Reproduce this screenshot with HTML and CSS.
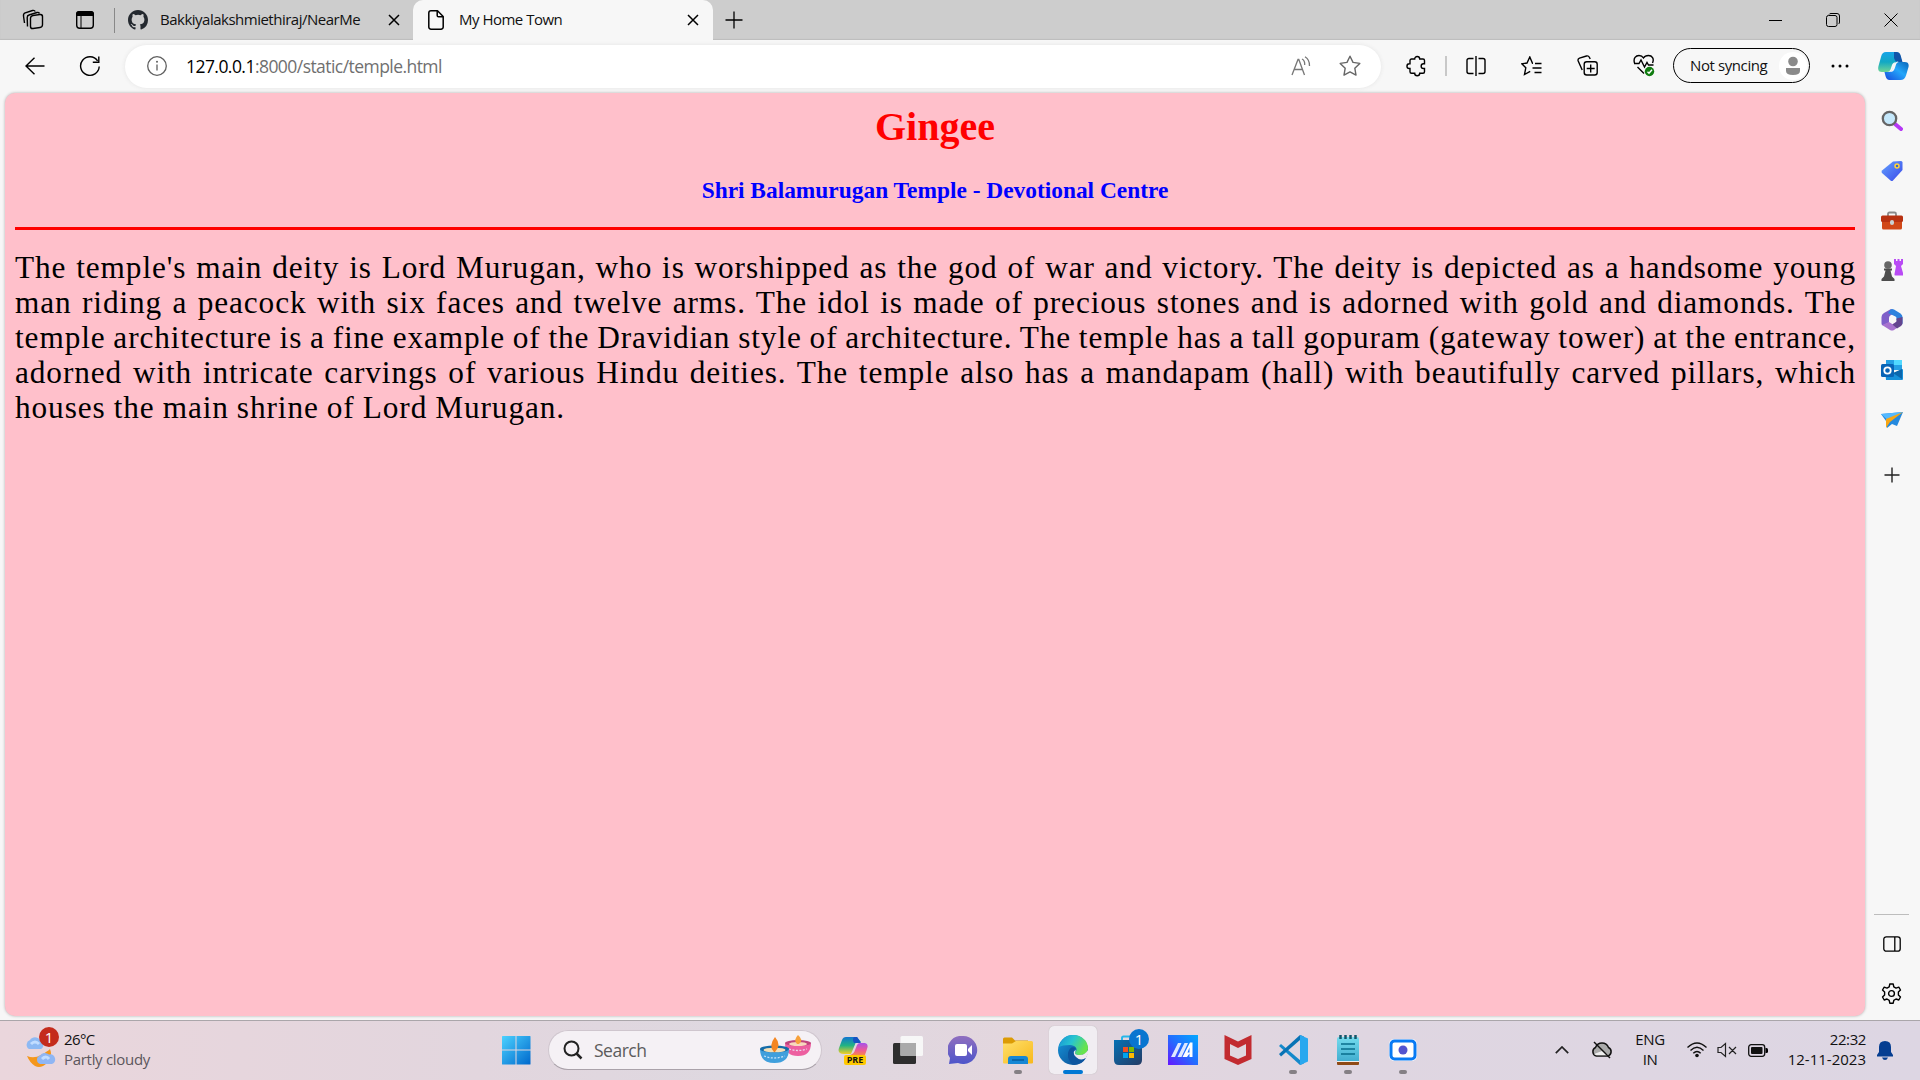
FILE: index.html
```html
<!DOCTYPE html>
<html lang="en">
<head>
<meta charset="utf-8">
<title>My Home Town</title>
<link rel="stylesheet" href="styles.css">
</head>
<body>
<div class="tabstrip">
  <div class="cell workspaces"><svg width="22" height="22" viewBox="0 0 22 22" class="line"><rect x="8.500" y="6" width="12" height="13" rx="2.500" transform="skewY(-8) translate(0 2)"/><path d="M5.500 17.500 L5.200 8.500 Q5.200 6.500 7 6 L15 3.500 Q16.500 3 17.500 4.500"/><path d="M2.500 14 L1.500 7 Q1.200 4.500 3.200 3.800 L10.500 1.500 Q12.500 1 13.300 2.500"/></svg></div>
  <div class="cell tabmenu"><svg width="20" height="20" viewBox="0 0 20 20"><rect x="1.700" y="1.700" width="16.600" height="16.600" rx="3" fill="none" stroke="#000" stroke-width="1.400"/><path d="M1 6V4a3 3 0 0 1 3-3h12a3 3 0 0 1 3 3v2z"/><path d="M6 6v12" stroke="#000"/></svg></div>
  <div class="tab idle">
    <svg width="20" height="20" viewBox="0 0 16 16"><path fill="#24292f" d="M8 0C3.580 0 0 3.580 0 8c0 3.540 2.290 6.530 5.470 7.590.4.070.55-.17.55-.38 0-.19-.01-.82-.01-1.490-2.010.37-2.530-.49-2.690-.94-.09-.23-.48-.94-.82-1.130-.28-.15-.68-.52-.01-.53.63-.01 1.080.58 1.230.82.720 1.210 1.870.87 2.330.66.070-.52.280-.87.510-1.070-1.780-.2-3.640-.89-3.640-3.950 0-.87.310-1.590.82-2.150-.08-.2-.36-1.020.08-2.120 0 0 .67-.21 2.200.82a7.600 7.600 0 0 1 4 0c1.530-1.040 2.200-.82 2.200-.82.44 1.100.16 1.920.08 2.120.51.56.82 1.270.82 2.150 0 3.070-1.870 3.750-3.650 3.950.29.25.54.73.54 1.480 0 1.070-.01 1.930-.01 2.200 0 .21.15.46.55.38A8 8 0 0 0 16 8c0-4.420-3.580-8-8-8z"/></svg>
    <span class="t-repo">Bakkiyalakshmiethiraj/NearMe</span>
    <svg class="x" width="12" height="12" viewBox="0 0 12 12"><path d="M1 1l10 10M11 1L1 11" stroke="#000" stroke-width="1.500"/></svg>
  </div>
  <div class="tab active">
    <svg width="16" height="20" viewBox="0 0 16 20" fill="none" stroke="#000" stroke-width="1.500" stroke-linejoin="round"><path d="M3 .8h6.500L15.200 6.500V17a2.200 2.200 0 0 1-2.200 2.200H3A2.200 2.200 0 0 1 .8 17V3A2.200 2.200 0 0 1 3 .8z"/><path d="M9.200 1v4.500q0 1.300 1.300 1.300h4.500"/></svg>
    <span class="t-home">My Home Town</span>
    <svg class="x" width="12" height="12" viewBox="0 0 12 12"><path d="M1 1l10 10M11 1L1 11" stroke="#000" stroke-width="1.500"/></svg>
  </div>
  <svg class="plus" width="18" height="18" viewBox="0 0 18 18"><path d="M9 .5v17M.5 9h17" stroke="#000" stroke-width="1.300"/></svg>
  <div class="wincontrols">
    <svg width="13" height="14"><path d="M0 7.500h13" stroke="#000"/></svg>
    <svg width="14" height="14" viewBox="0 0 14 14" fill="none" stroke="#000"><rect x=".5" y="2.500" width="10.500" height="11" rx="2"/><path d="M3 1.500Q3.500.5 5 .5h6a2.500 2.500 0 0 1 2.500 2.500v6q0 1.500-1 2"/></svg>
    <svg width="14" height="14" viewBox="0 0 14 14"><path d="M.5 .5l13 13M13.500 .5L.5 13.500" stroke="#000"/></svg>
  </div>
</div>

<div class="toolbar">
  <div class="cell back"><svg width="20" height="18" viewBox="0 0 20 18" class="line"><path d="M19.500 9H1M9.500 .7L1 9l8.500 8.300"/></svg></div>
  <div class="cell reload"><svg width="22" height="22" viewBox="0 0 22 22" class="line"><path d="M20.200 11.500A9.300 9.300 0 1 1 18.600 5.800"/><path d="M19.800 1.500v5.800h-6"/></svg></div>
  <div class="address">
    <svg width="20" height="20" viewBox="0 0 20 20"><circle cx="10" cy="10" r="9.300" fill="none" stroke="#606060" stroke-width="1.300"/><path d="M10 8.500v6" stroke="#606060" stroke-width="1.300"/><circle cx="10" cy="5.800" r="1" fill="#606060"/></svg>
    <span class="url"><b>127.0.0.1</b>:8000/static/temple.html</span>
    <svg class="read" width="20" height="20" viewBox="0 0 20 20" fill="none" stroke="#777" stroke-width="1.300"><path d="M1 19L7 3.500h.8L13.500 19M3 13.500h8.500M11 3q3 1.500 2.700 6M14 .8q4.700 3 4.500 9.200"/></svg>
    <svg class="star" width="22" height="22" viewBox="0 0 22 22" fill="none" stroke="#666" stroke-width="1.400" stroke-linejoin="round"><path d="M11 1.200l3 6.200 6.800 1-5 4.800 1.200 6.900L11 16.900l-6 3.200 1.200-6.900-5-4.800 6.800-1z"/></svg>
  </div>
  <div class="tools">
    <svg width="20" height="22" viewBox="0 0 20 22" class="line"><path d="M5.500 4h3.200a2.500 2.500 0 0 1 5 0H17a1.500 1.500 0 0 1 1.500 1.500v3.300h-1a2.300 2.300 0 0 0 0 4.700h1v3.300a1.500 1.500 0 0 1-1.500 1.500h-3.300a2.500 2.500 0 0 1-5 0H5.500A1.500 1.500 0 0 1 4 16.800v-3.300H3.300a2.300 2.300 0 0 1 0-4.700H4V5.500A1.500 1.500 0 0 1 5.500 4z"/></svg>
    <i class="vrule"></i>
    <svg width="20" height="20" viewBox="0 0 20 20" class="line"><path d="M7.500 2.500H3A2 2 0 0 0 1 4.500v11a2 2 0 0 0 2 2h4.500M12.500 2.500H17a2 2 0 0 1 2 2v11a2 2 0 0 1-2 2h-4.500M10 0v20"/></svg>
    <svg width="21" height="20" viewBox="0 0 21 20" class="line"><path d="M12 7.200h-.5L8.800 1 6 7 .8 7.800l4 4L3.500 18.500l5.700-3.200M14 7.500h6.500M11.500 12h9M13.500 16.500h7"/></svg>
    <svg width="21" height="21" viewBox="0 0 21 21" class="line"><rect x="7.200" y="6.700" width="13" height="13.300" rx="2.500"/><path d="M13.700 9.500v8M9.700 13.500h8M5.200 15L1.200 6Q.5 4 2.500 3.200L9.500 1q2-.5 3 1.500l.7 1.500"/></svg>
    <svg width="22" height="23" viewBox="0 0 22 23" class="line"><path d="M1.500 9C0 4 3 1.500 6 1.500q3 0 4.500 2.500Q12 1.500 15.500 1.500c3.500 0 6 3 4 7.500M1 9.500h5L8 6l3.500 7 2.500-4.500 1.500 2.500h5M4.500 13l6.500 6.500"/><circle cx="16.500" cy="17.500" r="4.700" fill="#107c10" stroke="none"/><path d="M14.500 17.800l1.500 1.500 3-3.500" stroke="#fff"/></svg>
  </div>
  <div class="sync"><span>Not syncing</span><svg width="28" height="28" viewBox="0 0 28 28"><circle cx="14" cy="14" r="14" fill="#fff"/><circle cx="14" cy="9.500" r="4.800" fill="#8a8a8a"/><path d="M7 16h14v3q0 4-7 4t-7-4z" fill="#8a8a8a"/></svg></div>
  <svg class="dots" width="18" height="4" viewBox="0 0 18 4"><circle cx="2" cy="2" r="1.500"/><circle cx="9" cy="2" r="1.500"/><circle cx="16" cy="2" r="1.500"/></svg>
  <svg class="copilot" width="31" height="28" viewBox="0 0 31 28">
    <defs><linearGradient id="ca" x1="0" y1="0" x2="0" y2="1"><stop offset="0" stop-color="#18a5e8"/><stop offset=".5" stop-color="#12a8c4"/><stop offset="1" stop-color="#6fd596"/></linearGradient><linearGradient id="cb" x1="1" y1="0" x2="0" y2="1"><stop offset="0" stop-color="#0765b8"/><stop offset=".45" stop-color="#24a6fa"/><stop offset="1" stop-color="#164bdc"/></linearGradient></defs>
    <path d="M17.500 10h9q5 0 4 5l-2.500 8.500Q26.500 28 22.500 28H11.500q-3 0-4-4l-1-4h4q3 0 4-3z" fill="url(#cb)"/>
    <path d="M8 0h10q3 0 4 3l2 7h-5q-4 0-5 3l-1.500 4.500q-1 2.500-3.500 2.500H4q-5 0-3.500-6L3 5Q4 0 8 0z" fill="url(#ca)"/>
    <path d="M16 0h2.500q3 0 4 3l2 7h-5q-3-1-3.500-4z" fill="#1155a9"/>
    <path d="M19.500 9.500q-3 .5-4 3.500l-1.500 4.500q-.8 2-3 2.500 4.500.5 5.700-3.500l1.500-4.500q.5-1.500 2.500-2z" fill="#f7f7f7"/></svg>
</div>

<div class="main">
  <div class="page">
    <h1>Gingee</h1>
    <h3>Shri Balamurugan Temple - Devotional Centre</h3>
    <hr>
    <div class="story">
      <p>The temple's main deity is Lord Murugan, who is worshipped as the god of war and victory. The deity is depicted as a handsome young</p>
      <p>man riding a peacock with six faces and twelve arms. The idol is made of precious stones and is adorned with gold and diamonds. The</p>
      <p>temple architecture is a fine example of the Dravidian style of architecture. The temple has a tall gopuram (gateway tower) at the entrance,</p>
      <p>adorned with intricate carvings of various Hindu deities. The temple also has a mandapam (hall) with beautifully carved pillars, which</p>
      <p class="last">houses the main shrine of Lord Murugan.</p>
    </div>
  </div>
  <div class="sidebar">
    <div class="s"><svg width="22" height="22" viewBox="0 0 22 22"><path d="M14 14l6 5" stroke="#b638f5" stroke-width="4" stroke-linecap="round"/><circle cx="8.500" cy="8.500" r="6.700" fill="#c5e8fb" stroke="#656565" stroke-width="2.300"/></svg></div>
    <div class="s"><svg width="22" height="22" viewBox="0 0 22 22"><defs><linearGradient id="tg" x1="0" y1="0" x2="1" y2="1"><stop offset="0" stop-color="#64a2ff"/><stop offset="1" stop-color="#3948e8"/></linearGradient></defs><path d="M12 1.500L20 1q1.500 0 1.500 1.500V10L12 20.500q-1 1-2.500 0L1 13q-1-1 0-2.500z" fill="url(#tg)"/><circle cx="16" cy="6" r="2" fill="#3b64ca" stroke="#ffd43a" stroke-width="1.500"/></svg></div>
    <div class="s"><svg width="24" height="20" viewBox="0 0 24 20"><path d="M8 5V3q0-1.500 1.500-1.500h5Q16 1.500 16 3v2" fill="none" stroke="#8a8a8a" stroke-width="1.800"/><rect x="2" y="9" width="20" height="9.500" rx="1.500" fill="#d14818"/><rect x="1" y="4.500" width="22" height="6.500" rx="1.500" fill="#b83212"/><rect x="10" y="9" width="4" height="5" rx="2" fill="#c9d2d4"/></svg></div>
    <div class="s"><svg width="24" height="24" viewBox="0 0 24 24"><path d="M14 1v5l2 2-1.500 8q-.5 1.500 1 1.500H23V15l-2-7 2-2V1h-2v2h-1.500V1h-2v2H16V1z" fill="#b94bf5"/><circle cx="8" cy="7" r="3.800" fill="#666"/><path d="M4 10.500h8v2h-1.500l1.500 6 2.500 2.500v2H1.500v-2L4 18.500l1.500-6H4z" fill="#4d4d4d"/></svg></div>
    <div class="s"><svg width="22" height="22" viewBox="0 0 22 22"><path d="M10 0L3 4Q.5 5.500.5 8v6.500q0 2.500 2.500 1.500l5-2.500V9q0-2 2-3l4-2z" fill="#7f5fc9"/><path d="M10 .2q1.500-.5 3 .3l6.500 4Q21.500 6 21.500 8v7l-6-4V9q0-1-1-1.500L7 4z" fill="#2d82de"/><path d="M1 16l7-3 3.500 2.200L15 13l5 3-7 5q-2 1-4 0z" fill="#a772cf"/><path d="M15.500 9.500l6-1.500v6q0 2-1.500 3l-4 2.500-4.500-4 3-2q1-.5 1-2z" fill="#63458f"/></svg></div>
    <div class="s"><svg width="22" height="22" viewBox="0 0 22 22"><path d="M5 1h15q1 0 1 1v9H5z" fill="#25a0e4"/><path d="M13 1h8v5h-8z" fill="#50d9ff"/><path d="M4 10l9 4 9-4v10q0 1-1 1H5z" fill="#1690da"/><path d="M12 14l9-4v10z" fill="#0b66ac"/><rect x="0" y="5" width="13" height="13" rx="1.500" fill="#0864b6"/><circle cx="6.500" cy="11.500" r="3.200" fill="none" stroke="#fff" stroke-width="1.800"/></svg></div>
    <div class="s"><svg width="22" height="18" viewBox="0 0 22 18"><path d="M0 3L22 1 16 15l-5-2-5 4-1-7z" fill="#2489de"/><path d="M0 3l22-2-14 9z" fill="#53b9ff"/><path d="M22 1L5 8v9l4-6z" fill="#f6a514"/></svg></div>
    <div class="s add"><svg width="16" height="16"><path d="M8 .5v15M.5 8h15" stroke="#222" stroke-width="1.400"/></svg></div>
    <div class="foot">
      <div class="s"><svg width="18" height="16" viewBox="0 0 18 16" fill="none" stroke="#000" stroke-width="1.300"><rect x=".8" y=".8" width="16.400" height="14.400" rx="2.500"/><path d="M11.800 1v14"/></svg></div>
      <div class="s"><svg width="21" height="21" viewBox="0 0 21 21" class="line" stroke-linejoin="round"><path d="M8.800 1h3.400l.6 2.900 2.200 1.200 2.800-1L19.500 7l-2.100 2.100v2.800l2.100 2.100-1.700 3-2.800-1-2.200 1.300-.6 2.900H8.800l-.6-2.900L6 16l-2.800 1-1.700-3 2.100-2.100V9.100L1.500 7l1.700-2.900 2.800 1 2.200-1.200z"/><circle cx="10.500" cy="10.500" r="2.900"/></svg></div>
    </div>
  </div>
</div>

<div class="taskbar">
  <div class="weather">
    <div class="wicon"><svg width="32" height="36" viewBox="0 0 32 36"><path d="M3 24q7 3 14-1t9-6q3 8-3 14t-12 3q-5-3-8-10z" fill="#f4971c"/><path d="M5 17a5 5 0 0 1 1-9 6 6 0 0 1 10 0 5 5 0 0 1 1 9z" fill="#8db9f3"/><path d="M16 32a4.500 4.500 0 0 1 0-8.500 6 6 0 0 1 9-1 5 5 0 0 1 3 9.500z" fill="#8fb6f4"/><path d="M7 12q4-4 8 0M18 27q4-4 7 0" stroke="#c2ddff" stroke-width="3" fill="none"/></svg><em>1</em></div>
    <div class="two"><span class="temp">26°C</span><span class="sky">Partly cloudy</span></div>
  </div>
  <svg class="start" width="30" height="30" viewBox="0 0 30 30"><defs><linearGradient id="w" x1="0" y1="0" x2="1" y2="1"><stop offset="0" stop-color="#4bd2ff"/><stop offset="1" stop-color="#0068cc"/></linearGradient></defs><path d="M1.500 1H14.500V14.500H1V1.500zM15.500 1H29q.5 0 .5 .5V14.500H15.500zM1 15.500H14.500V29.500H1.500q-.5 0-.5-.5zM15.500 15.500H29.500V29q0 .5-.5.500H15.500z" fill="url(#w)"/></svg>
  <div class="search">
    <svg width="20" height="20" viewBox="0 0 20 20" fill="none" stroke="#222"><circle cx="8.500" cy="8.500" r="7" stroke-width="2"/><path d="M13.500 13.500l5 5" stroke-width="2.500"/></svg>
    <span>Search</span>
    <svg class="diya" width="51" height="30" viewBox="0 0 51 30"><path d="M25 8h26q0 13-13 13T25 8z" fill="#ed5fa0"/><ellipse cx="38" cy="8" rx="13" ry="3" fill="#c0447c"/><ellipse cx="38" cy="9" rx="9" ry="2" fill="#f8d8be"/><path d="M37 9q-4-4 1-9 6 5 1 9z" fill="#f7a13b"/><path d="M0 14h29q0 14-14.500 14T0 14z" fill="#409fdc"/><ellipse cx="14.500" cy="14" rx="14.500" ry="3.500" fill="#146ba8"/><ellipse cx="14.500" cy="15" rx="11" ry="2.300" fill="#f4dfb6"/><path d="M14 17q-6-6 1-15 7 8 0 15z" fill="#f58620"/><path d="M4 21q10 4 21 0M29 14q9 3 18 0" stroke="#e9f4ff" stroke-width="1.300" stroke-dasharray="2 1.500" fill="none" opacity=".8"/></svg>
  </div>
  <div class="apps">
    <div class="app"><svg width="30" height="30" viewBox="0 0 30 30"><defs><linearGradient id="p1" x1="0" y1="0" x2="0" y2="1"><stop offset="0" stop-color="#1275d1"/><stop offset=".5" stop-color="#22b383"/><stop offset="1" stop-color="#f4cf23"/></linearGradient><linearGradient id="p2" x1="0" y1="0" x2="0" y2="1"><stop offset="0" stop-color="#a651ec"/><stop offset=".6" stop-color="#ee5a96"/><stop offset="1" stop-color="#f78550"/></linearGradient></defs><path d="M8 2h11l4 5h-5l-5 12H6q-7 0-5-6l3-8q1-3 4-3z" fill="url(#p1)"/><path d="M19 2l4 6h-7q-2-4 0-6z" fill="#1652c2"/><path d="M22 8h5q4 1 2 6l-2 6H12q4-1 5-5l2-5q1-2 3-2z" fill="url(#p2)"/></svg><strong class="pre">PRE</strong></div>
    <div class="app"><svg width="30" height="28" viewBox="0 0 30 28"><rect x="0" y="7" width="23" height="21" rx="1.500" fill="#2e2e2e"/><rect x="7.500" y="0" width="22.500" height="20" rx="1.500" fill="#f7f7f7"/><path d="M7.500 7H23v13H7.500z" fill="#aaa"/></svg></div>
    <div class="app"><svg width="30" height="28" viewBox="0 0 30 28"><defs><linearGradient id="c" x1="0" y1="0" x2="0" y2="1"><stop offset="0" stop-color="#906fbf"/><stop offset="1" stop-color="#4d55ca"/></linearGradient></defs><path d="M15 0a14 14 0 1 1-5 27L1 28l1-6A14 14 0 0 1 15 0z" fill="url(#c)"/><rect x="7" y="8" width="12" height="12" rx="2" fill="#fff"/><path d="M20 13l4-4v10l-4-4z" fill="#fff"/></svg></div>
    <div class="app run"><svg width="30" height="27" viewBox="0 0 30 27"><defs><linearGradient id="f" x1="0" y1="0" x2="1" y2="1"><stop offset="0" stop-color="#ffe06b"/><stop offset="1" stop-color="#f8b81b"/></linearGradient></defs><path d="M0 10V2Q0 .5 1.500.5H9l3 3h13v7z" fill="#dc9b05"/><path d="M0 6.500h9L13 4h15.500q1.500 0 1.500 1.500v20q0 1-1 1H1q-1 0-1-1z" fill="url(#f)"/><path d="M5 27v-5q0-3 3-3h14q3 0 3 3v5z" fill="#1687d5"/><path d="M9 23h12" stroke="#075c9d" stroke-width="1.500"/></svg></div>
    <div class="app current"><svg width="30" height="30" viewBox="0 0 30 30"><defs><linearGradient id="e1" x1="0" y1="0" x2="1" y2=".4"><stop offset="0" stop-color="#1692d6"/><stop offset=".5" stop-color="#28c5d0"/><stop offset="1" stop-color="#68e34c"/></linearGradient><linearGradient id="e2" x1="0" y1="0" x2="1" y2="1"><stop offset="0" stop-color="#1799dd"/><stop offset="1" stop-color="#0a438b"/></linearGradient></defs><circle cx="15" cy="15" r="15" fill="url(#e2)"/><path d="M1 12Q4 0 15 0c9 0 15 6 15 13 0 5-4 7-8 7-5 0-6-2-4-4 2-2-1-6-6-6Q4 10 1 12z" fill="url(#e1)"/><path d="M18 15q-3 1-3 5 1 4 6 5 4 0 7-2l2-4v-4q-3 5-8 5-5 0-5-2 0-1 1-3z" fill="#efe9ef"/><path d="M10 18q2-8 8-5-5 4 0 9t10 1q-4 7-12 7-7-4-6-12z" fill="#0d559f"/></svg></div>
    <div class="app"><svg width="30" height="30" viewBox="0 0 30 30"><defs><linearGradient id="s" x1="0" y1="0" x2="1" y2="1"><stop offset="0" stop-color="#0671b4"/><stop offset="1" stop-color="#243c65"/></linearGradient></defs><path d="M9 7V3q0-1.500 1.500-1.500H20V7" fill="none" stroke="#27b7e9" stroke-width="2"/><path d="M1 5h28v20q0 5-5 5H6q-5 0-5-5z" fill="url(#s)"/><path d="M10 12h5v5h-5z" fill="#f25022"/><path d="M16 12h5v5h-5z" fill="#7fba00"/><path d="M10 18h5v5h-5z" fill="#00a4ef"/><path d="M16 18h5v5h-5z" fill="#ffb900"/></svg><em class="badge">1</em></div>
    <div class="app"><svg width="30" height="30" viewBox="0 0 30 30"><defs><linearGradient id="m" x1="0" y1="1" x2="1" y2="0"><stop offset="0" stop-color="#6616ff"/><stop offset=".5" stop-color="#236eff"/><stop offset="1" stop-color="#02a9ff"/></linearGradient></defs><path d="M0 0h30v30H0z" fill="url(#m)"/><path d="M3 22L10 8h3.500L7 22zM9.500 22l7-14H20l-6.500 14z" fill="#dfe8ff"/><path d="M14.500 22L22 7.500h2.500V22h-3v-3.500l-2.500 3.500zM19.500 17.500h2v-5z" fill="#fff" fill-rule="evenodd"/></svg></div>
    <div class="app"><svg width="28" height="30" viewBox="0 0 28 30"><path d="M.5 0L14 6.500 27.500 0v24L14 30 .5 24z" fill="#c22b30"/><path d="M6 9l8 4 8-4v11.500L14 24l-8-3.500z" fill="#e0d7df"/></svg></div>
    <div class="app run"><svg width="30" height="30" viewBox="0 0 30 30"><path d="M3 9L26 28.500 22 30 1 11z" fill="#1589cb"/><path d="M3 21.500L26 1.500 22 0 1 19z" fill="#0873b5"/><path d="M22 0l8 3.500v23L22 30z" fill="#29a8ef"/></svg></div>
    <div class="app run"><svg width="22" height="30" viewBox="0 0 22 30"><defs><linearGradient id="n" x1="0" y1="0" x2="0" y2="1"><stop offset="0" stop-color="#74dbed"/><stop offset="1" stop-color="#42aed0"/></linearGradient></defs><path d="M0 26h22v3q0 1-1 1H1q-1 0-1-1z" fill="#8f4a16"/><path d="M0 24h22v3H0z" fill="#eee"/><path d="M0 4q0-2 2-2h18q2 0 2 2v22H0z" fill="url(#n)"/><path d="M4 9h14M4 14h14M4 19h14" stroke="#086d8c" stroke-width="1.700"/><path d="M3.500 0v4M8.500 0v4M13.500 0v4M18.500 0v4" stroke="#12576b" stroke-width="2.500"/></svg></div>
    <div class="app run"><svg width="30" height="24" viewBox="0 0 30 24"><rect x="1" y="1" width="28" height="22" rx="5" fill="#fff"/><rect x="3" y="3" width="24" height="18" rx="3.500" fill="#fff" stroke="#087af4" stroke-width="3"/><circle cx="15" cy="12" r="4.500" fill="#5354cf"/></svg></div>
  </div>
  <div class="tray">
    <svg class="chev" width="14" height="8" viewBox="0 0 14 8"><path d="M.8 7.200L7 1l6.200 6.200" fill="none" stroke="#222" stroke-width="1.700"/></svg>
    <svg class="cloud" width="22" height="18" viewBox="0 0 22 18"><path d="M5.500 15a4.500 4.500 0 0 1-1-8.500 7 7 0 0 1 13 0 4.500 4.500 0 0 1-1 8.500z" fill="#aaa" stroke="#111" stroke-width="1.500"/><path d="M3 13l8-3 7 4-2 .3H5z" fill="#eee"/><path d="M3 1l16 16" stroke="#111" stroke-width="1.500"/></svg>
    <div class="lang"><span>ENG</span><span>IN</span></div>
    <svg class="wifi" width="20" height="16" viewBox="0 0 20 16" fill="none" stroke="#111" stroke-width="1.400"><path d="M.5 5.500q9.500-9 19 0M3.500 8.500q6.500-6.500 13 0M6.300 11.300q3.700-3.700 7.400 0"/><circle cx="10" cy="13.500" r="1.800" fill="#111" stroke="none"/></svg>
    <svg class="vol" width="20" height="16" viewBox="0 0 20 16" fill="none" stroke="#222" stroke-width="1.200"><path d="M1 5.500h3L8.500 1.500v13L4 10.500H1zM12 5l7 7M19 5l-7 7"/></svg>
    <svg class="bat" width="20" height="13" viewBox="0 0 20 13"><rect x=".7" y=".7" width="16" height="11.600" rx="2.500" fill="none" stroke="#111" stroke-width="1.300"/><rect x="3" y="3" width="11.500" height="7" rx="1" fill="#111"/><path d="M17.500 4h1q1.500 0 1.500 1.500v2q0 1.500-1.500 1.500h-1z"/></svg>
    <div class="clock"><span class="time">22:32</span><span class="date">12-11-2023</span></div>
    <svg class="bell" width="16" height="19" viewBox="0 0 16 19" fill="#053e91"><path d="M8 0q6 0 6 6v5l2 3v1.500H0V14l2-3V6q0-6 6-6zM5 16.500h6Q10 19 8 19t-3-2.500z"/></svg>
  </div>
</div>
</body>
</html>
```
FILE: styles.css
```css
* { box-sizing: border-box; }
body {
  margin: 0;
  width: 1920px;
  height: 1080px;
  overflow: hidden;
  display: flex;
  flex-direction: column;
  background: #f7f7f7;
  font-family: "Open Sans", "Noto Sans", sans-serif;
  color: #111;
}
svg { display: block; flex: none; }
span { white-space: nowrap; }
.line { fill: none; stroke: #000; stroke-width: 1.4; }
.cell { display: flex; align-items: center; justify-content: center; flex: none; }

/* Tab strip */
.tabstrip {
  height: 40px;
  flex: none;
  display: flex;
  align-items: center;
  background: #cdcdcd;
  box-shadow: inset 0 -1px 1px #bdbdbd;
  font-size: 15px;
}
.workspaces { width: 65px; }
.tabmenu { width: 40px; }
.tab { display: flex; align-items: center; flex: none; }
.tab span { padding-bottom: 2px; }
.idle { width: 299px; height: 25px; margin-left: 9px; padding-left: 13px; border-left: 1px solid #888; }
.idle span { margin-left: 12px; width: 228px; }
.active { width: 300px; height: 40px; padding-left: 15px; background: #f7f7f7; border-radius: 10px 10px 0 0; }
.active span { margin-left: 15px; width: 228px; }
.t-repo { letter-spacing: -0.5px; }
.t-home { letter-spacing: -0.5px; }
.plus { margin-left: 12px; }
.wincontrols { display: flex; align-items: center; gap: 44px; margin-left: auto; margin-right: 22px; padding-bottom: 1px; }

/* Toolbar */
.toolbar { height: 53px; flex: none; display: flex; align-items: center; padding-bottom: 2px; background: #f7f7f7; }
.back { width: 70px; }
.reload { width: 40px; }
.address {
  width: 1256px;
  height: 43px;
  margin: 2px 0 0 15px;
  padding: 0 20px 2px 22px;
  display: flex;
  align-items: center;
  flex: none;
  border-radius: 22px;
  background: #fff;
  box-shadow: 0 0 4px #e4e4e4;
}
.url { margin-left: 19px; font-size: 17.5px; letter-spacing: -0.55px; color: #707070; }
.url b { font-weight: 400; color: #000; }
.read { margin-left: auto; }
.star { margin-left: 28px; }
.tools { display: flex; align-items: center; gap: 35px; margin-left: 25px; }
.vrule { width: 2px; height: 20px; margin: 0 -16px; background: #c8c8c8; }
.sync {
  width: 137px;
  height: 35px;
  margin-left: 18px;
  padding: 0 2px 0 16px;
  display: flex;
  align-items: center;
  justify-content: space-between;
  flex: none;
  border: 1px solid #000;
  border-radius: 18px;
  font-size: 15px;
}
.sync span { letter-spacing: -0.4px; padding-bottom: 2px; }
.dots { margin-left: 21px; }
.copilot { margin-left: 29px; }

/* Browser viewport and side panel */
.main { height: 927px; flex: none; display: flex; padding-left: 5px; }
.page {
  width: 1860px;
  height: 923px;
  padding: 11px 10px 10px;
  flex: none;
  border-radius: 10px;
  background: #ffc0cb;
  box-shadow: 0 0 3px #aaa;
  font-family: "Liberation Serif", serif;
}
h1 { margin: 0; height: 46px; line-height: 46px; font-size: 40px; text-align: center; color: red; }
h3 { margin: 27px 0 0; height: 26px; line-height: 26px; font-size: 23.4px; text-align: center; color: blue; }
hr { margin: 24px 0 0; height: 3px; border: 0; background: red; }
.story { margin-top: 20px; font-size: 31.3px; letter-spacing: 0.9px; word-spacing: -3px; color: #000; }
.story p { margin: 0 -1px 0 0; height: 35px; line-height: 35px; white-space: nowrap; text-align: justify; text-align-last: justify; }
.story .last { width: 550px; }

.sidebar { width: 53px; display: flex; flex-direction: column; align-items: center; padding-top: 1px; }
.s { height: 50px; display: flex; align-items: center; justify-content: center; flex: none; padding-top: 1px; }
.s:nth-child(-n+3) { padding-top: 3px; }
.add { margin-top: 5px; }
.foot { width: 35px; margin-top: auto; margin-bottom: 3px; border-top: 1px solid #bdbdbd; padding-top: 2px; }

/* Taskbar */
.taskbar {
  height: 60px;
  flex: none;
  display: flex;
  align-items: center;
  padding-bottom: 1px;
  border-top: 1px solid #aaa6aa;
  background: linear-gradient(90deg, #ead6dc, #e2d6de 25%, #ded8e0 38%, #e3d6de 53%, #dfd6e1 70%, #ddd6e3);
}
.weather { width: 501px; display: flex; align-items: center; padding-left: 24px; }
.wicon { position: relative; width: 40px; height: 40px; padding-top: 2px; }
em { font-style: normal; font-size: 15px; line-height: 20px; text-align: center; color: #fff; border-radius: 50%; }
.wicon em { position: absolute; left: 15px; top: -3px; width: 20px; height: 20px; background: #c42b1c; }
.two, .lang, .clock { display: flex; flex-direction: column; font-size: 15px; line-height: 20px; padding-bottom: 3px; }
.sky { color: #5c575c; letter-spacing: -0.3px; }
.temp { letter-spacing: -0.6px; }
.search {
  width: 274px;
  height: 40px;
  margin-left: 17px;
  padding: 0 10px 0 14px;
  display: flex;
  align-items: center;
  border: 1px solid #cfc6ce;
  border-bottom-color: #aaa2aa;
  border-radius: 20px;
  background: #f5f1f5;
  font-size: 17.5px;
  color: #5c5c5c;
}
.search span { margin-left: 11px; letter-spacing: -0.5px; padding-bottom: 1px; }
.diya { margin-left: auto; }
.apps { display: flex; margin-left: 3px; }
.app { position: relative; width: 55px; height: 48px; display: flex; align-items: center; justify-content: center; }
.run::after, .current::after {
  content: "";
  position: absolute;
  bottom: 0;
  width: 8px;
  height: 4px;
  border-radius: 2px;
  background: #858085;
}
.current::after { width: 20px; background: #0078d4; }
.current { width: 48px; margin: 0 3px 0 4px; border-radius: 5px; background: #f1edf2; box-shadow: 0 0 1px #aaa; }
.pre {
  position: absolute;
  left: 19px;
  top: 29px;
  width: 22px;
  height: 10px;
  border-radius: 2px;
  background: #ffc900;
  font-size: 9px;
  line-height: 10px;
  text-align: center;
}
.badge { position: absolute; left: 29px; top: 3px; width: 20px; height: 20px; background: #0875d0; }
.tray { display: flex; align-items: center; margin-left: auto; }
.cloud { margin-left: 22px; }
.lang { width: 40px; margin-left: 17px; text-align: center; letter-spacing: -0.4px; }
.wifi { margin-left: 17px; }
.vol { margin-left: 10px; }
.bat { margin-left: 11px; }
.clock { width: 98px; text-align: right; }
.date { letter-spacing: 0; }
.time { letter-spacing: -0.4px; }
.bell { margin: 0 27px 0 11px; }
```
